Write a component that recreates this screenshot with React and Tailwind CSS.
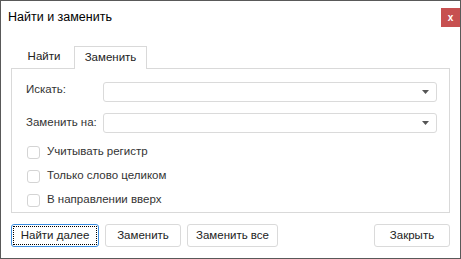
import React from 'react';

const font = { fontFamily: '"Liberation Sans", Arial, sans-serif' };

const Combo = () => (
    <div className="flex-1 h-[20px] border border-[#dadada] rounded-[3px] bg-white flex items-center justify-end pr-[7px]">
        <svg width="7" height="4" viewBox="0 0 7 4">
            <path d="M0 0h7L3.5 4z" fill="#555" />
        </svg>
    </div>
);

const Check = ({ label }) => (
    <div className="h-[24px] flex items-center gap-[7px] pl-[1px]">
        <div className="w-[13px] h-[13px] border border-[#d4d4d4] rounded-[3px] bg-white" />
        <span className="text-[11.5px] text-[#333]">{label}</span>
    </div>
);

const Btn = ({ children, focused, w }) => (
    <div className={`h-[23px] ${w} rounded-[3px] flex items-center justify-center text-[11.5px] text-[#222] bg-white ${focused ? 'border border-[#3d8ee0] p-[1px]' : 'border border-[#dadada]'}`}>
        {focused ? (
            <div className="w-full h-full border border-dotted border-black flex items-center justify-center">{children}</div>
        ) : children}
    </div>
);

export default function App() {
    return (
        <div style={font} className="w-[461px] h-[259px] bg-white border border-[#595959] flex flex-col">
            <div className="h-[45px] flex items-start justify-between">
                <div className="pl-[7px] pt-[7px] text-[12.5px] text-black">Найти и заменить</div>
                <div className="mt-[7px] w-[19px] h-[19px] bg-[#c75050] flex items-center justify-center text-white text-[10px] font-bold leading-none">x</div>
            </div>

            <div className="flex pl-[13px] h-[22px] relative z-10">
                <div className="w-[60px] flex items-center justify-center text-[11.5px] text-[#222]">Найти</div>
                <div className="w-[73px] h-[23px] border border-b-0 border-[#d9d9d9] bg-white flex items-center justify-center text-[11.5px] text-[#222]">Заменить</div>
            </div>

            <div className="mx-[10px] h-[145px] border border-[#d9d9d9] pl-[14px] pr-[12px] pt-[13px] flex flex-col">
                <div className="flex items-center">
                    <div className="w-[77px] text-[11.5px] text-[#333] -mt-[4px]">Искать:</div>
                    <Combo />
                </div>
                <div className="flex items-center mt-[11px]">
                    <div className="w-[77px] text-[11.5px] text-[#333]">Заменить на:</div>
                    <Combo />
                </div>
                <div className="mt-[7px] flex flex-col">
                    <Check label="Учитывать регистр" />
                    <Check label="Только слово целиком" />
                    <Check label="В направлении вверх" />
                </div>
            </div>

            <div className="flex items-center px-[10px] mt-[11px] gap-[6px]">
                <Btn focused w="w-[88px]">Найти далее</Btn>
                <Btn w="w-[76px]">Заменить</Btn>
                <Btn w="w-[91px]">Заменить все</Btn>
                <div className="flex-1" />
                <Btn w="w-[76px]">Закрыть</Btn>
            </div>
        </div>
    );
}
